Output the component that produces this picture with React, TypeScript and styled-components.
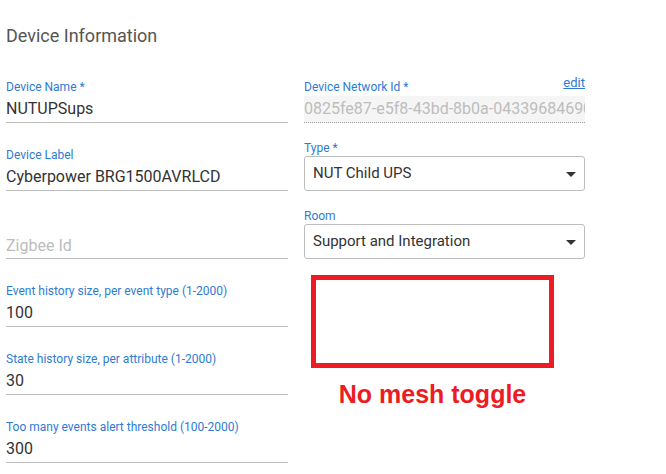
import React from "react";
import styled, { createGlobalStyle } from "styled-components";

const Global = createGlobalStyle`
  html, body { margin: 0; padding: 0; background: #ffffff; }
  body { font-family: Roboto, "Liberation Sans", Arial, sans-serif; }
  * { box-sizing: border-box; }
`;

const Page = styled.div`
  width: 666px;
  height: 474px;
  padding: 24px 0 0 6px;
  overflow: hidden;
`;

const Title = styled.h2`
  margin: 0 0 7px 0;
  font-size: 18px;
  line-height: 24px;
  font-weight: 400;
  color: #555555;
`;

const Columns = styled.div`
  display: grid;
  grid-template-columns: 282px 281px;
  column-gap: 16px;
  align-items: start;
`;

const Column = styled.div`
  display: flex;
  flex-direction: column;
`;

const FieldBlock = styled.div`
  height: 68px;
  display: flex;
  flex-direction: column;
  justify-content: flex-end;
`;

const Label = styled.div`
  font-size: 12px;
  line-height: 14px;
  color: #2e7bd3;
  white-space: nowrap;
`;

const Value = styled.div<{ $placeholder?: boolean }>`
  font-size: 16px;
  line-height: 20px;
  padding: ${(p) => (p.$placeholder ? "6px 0 2px" : "5px 0 3px")};
  color: ${(p) => (p.$placeholder ? "#bdbdbd" : "#333333")};
  border-bottom: 1px solid #bdbdbd;
  white-space: nowrap;
`;

const LabelRow = styled.div`
  display: flex;
  justify-content: space-between;
  align-items: flex-start;
`;

const EditLink = styled.a`
  font-size: 13px;
  line-height: 15px;
  margin-top: -5px;
  color: #2e7bd3;
  text-decoration: underline;
  cursor: pointer;
`;

const Disabled = styled.div`
  margin-top: 2px;
  background: #f5f5f5;
  font-size: 16px;
  line-height: 20px;
  padding: 3px 0 3px 0;
  color: #bdbdbd;
  border-bottom: 1px dotted #9e9e9e;
  white-space: nowrap;
  overflow: hidden;
`;

const SelectBox = styled.div`
  margin-top: 1px;
  height: 35px;
  border: 1px solid #bdbdbd;
  border-radius: 3px;
  padding: 6px 8px 7px 8px;
  display: flex;
  align-items: flex-start;
  justify-content: space-between;
  font-size: 15px;
  line-height: 20px;
  color: #333333;
`;

const Arrow = styled.span`
  width: 0;
  height: 0;
  margin-top: 9px;
  border-left: 5px solid transparent;
  border-right: 5px solid transparent;
  border-top: 5px solid #333333;
`;

const Annotation = styled.div`
  margin: 16px 0 0 7px;
  width: 243px;
  display: flex;
  flex-direction: column;
  align-items: center;
`;

const RedBox = styled.div`
  width: 243px;
  height: 93px;
  border: 5px solid #ed1c24;
`;

const RedText = styled.div`
  margin-top: 12px;
  font-family: "Liberation Sans", Arial, sans-serif;
  font-weight: 700;
  font-size: 25px;
  line-height: 28px;
  color: #ed1c24;
  white-space: nowrap;
`;

const Text = ({ label, value, placeholder }: { label?: string; value?: string; placeholder?: string }) => (
  <FieldBlock>
    {label && <Label>{label}</Label>}
    <Value $placeholder={!!placeholder}>{value ?? placeholder}</Value>
  </FieldBlock>
);

const Select = ({ label, value }: { label: string; value: string }) => (
  <FieldBlock>
    <Label>{label}</Label>
    <SelectBox>
      <span>{value}</span>
      <Arrow />
    </SelectBox>
  </FieldBlock>
);

export default function App() {
  return (
    <>
      <Global />
      <Page>
        <Title>Device Information</Title>
        <Columns>
          <Column>
            <Text label="Device Name *" value="NUTUPSups" />
            <Text label="Device Label" value="Cyberpower BRG1500AVRLCD" />
            <Text placeholder="Zigbee Id" />
            <Text label="Event history size, per event type (1-2000)" value="100" />
            <Text label="State history size, per attribute (1-2000)" value="30" />
            <Text label="Too many events alert threshold (100-2000)" value="300" />
          </Column>
          <Column>
            <FieldBlock>
              <LabelRow>
                <Label>Device Network Id *</Label>
                <EditLink>edit</EditLink>
              </LabelRow>
              <Disabled>0825fe87-e5f8-43bd-8b0a-04339684690e</Disabled>
            </FieldBlock>
            <Select label="Type *" value="NUT Child UPS" />
            <Select label="Room" value="Support and Integration" />
            <Annotation>
              <RedBox />
              <RedText>No mesh toggle</RedText>
            </Annotation>
          </Column>
        </Columns>
      </Page>
    </>
  );
}
